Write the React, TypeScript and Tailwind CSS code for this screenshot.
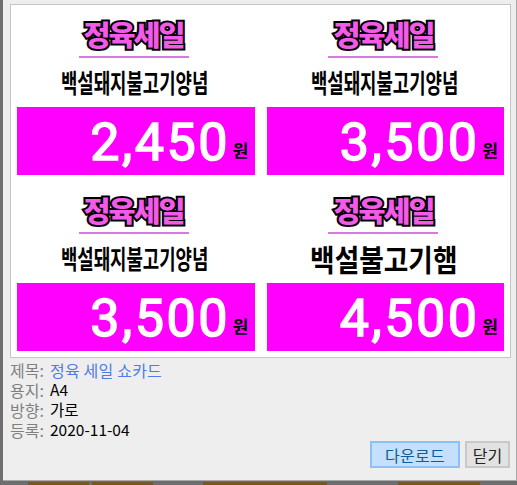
const cards = [
  { name: "백설돼지불고기양념", price: "2,450", big: false },
  { name: "백설돼지불고기양념", price: "3,500", big: false },
  { name: "백설돼지불고기양념", price: "3,500", big: false },
  { name: "백설불고기햄", price: "4,500", big: true },
];

const kr = "font-['Noto_Sans_CJK_KR','Noto_Sans',sans-serif]";

function SaleCard({ name, price, big }: { name: string; price: string; big: boolean }) {
  return (
    <div className="flex h-[176px] flex-col items-center">
      <div className="mr-[4px] mt-[13px] flex h-[38px] w-[110px] items-center justify-center pb-[6px]">
        <span className="inline-block scale-x-[1.05] whitespace-nowrap text-[28px] font-black leading-none tracking-[-2px] text-[#f45ae8] [-webkit-text-stroke:4px_#000] [paint-order:stroke_fill]">
          정육세일
        </span>
      </div>
      <div className="mr-[4px] h-[2px] w-[110px] bg-[#d878e0]" />
      <div className="flex h-[49px] w-full items-center justify-center whitespace-nowrap pr-[2px] pb-[2px] font-bold leading-none text-black">
        {big ? (
          <span className="inline-block scale-x-[0.89] text-[30px]">{name}</span>
        ) : (
          <span className="inline-block scale-x-[0.685] text-[26px]">{name}</span>
        )}
      </div>
      <div className="flex h-[68px] w-full items-center justify-end bg-[#ff00ff] pr-[6px]">
        <span className="mt-[3px] inline-block font-['Roboto','Noto_Sans',sans-serif] text-[52px] font-normal leading-none tracking-[2.5px] text-white [-webkit-text-stroke:1.5px_#fff]">
          {price}
        </span>
        <span className="ml-[3px] mt-[16px] text-[17px] font-bold leading-none text-black">원</span>
      </div>
    </div>
  );
}

function Meta({ label, children }: { label: string; children: React.ReactNode }) {
  return (
    <div className="flex h-[20px] items-center text-[15.5px] leading-none">
      <span className="w-[40px] whitespace-nowrap text-[16px] text-[#808080]">{label}:</span>
      {children}
    </div>
  );
}

export default function App() {
  return (
    <div className={`h-[485px] w-[517px] overflow-hidden bg-[#6e6e6e] ${kr}`}>
      <div className="ml-[3px] flex h-[481px] w-[514px] flex-col border-r border-b border-[#a8a8a8] bg-[#eeeeee] pl-[7px] pr-[5px] pt-[4px]">
        <div className="grid h-[354px] grid-cols-2 gap-x-[12px] border border-[#c4c4c4] bg-white px-[6px]">
          {cards.map((c, i) => (
            <SaleCard key={i} {...c} />
          ))}
        </div>
        <div className="mt-[2px] flex flex-col">
          <Meta label="제목">
            <span className="text-[16px] tracking-[0.2px] text-[#4f7be8]">정육 세일 쇼카드</span>
          </Meta>
          <Meta label="용지">
            <span className="text-black">A4</span>
          </Meta>
          <Meta label="방향">
            <span className="text-black">가로</span>
          </Meta>
          <Meta label="등록">
            <span className="text-black">2020-11-04</span>
          </Meta>
        </div>
        <div className="mt-[1px] flex justify-end gap-[5px] pr-[1px]">
          <button className="h-[27px] w-[90px] border-2 border-[#8cc0fa] bg-[#c4e0fc] text-[16px] tracking-[0.3px] text-[#0f5c96]">
            다운로드
          </button>
          <button className="h-[27px] w-[45px] border-2 border-[#c8c8c8] bg-[#e2e2e2] text-[16px] text-[#222222]">
            닫기
          </button>
        </div>
      </div>
      <div className="mt-[1px] flex h-[3px]">
        <div className="ml-[28px] w-[61px] bg-[#7a5520]" />
        <div className="ml-[3px] w-[61px] bg-[#7a5520]" />
        <div className="ml-[50px] w-[124px] bg-[#7a5520]" />
        <div className="ml-[71px] w-[82px] bg-[#7a5520]" />
      </div>
    </div>
  );
}
